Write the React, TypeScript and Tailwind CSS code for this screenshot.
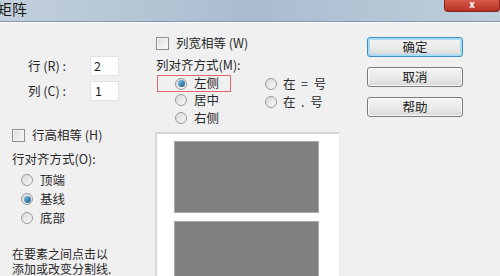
import React from 'react';

const font = { fontFamily: '"Noto Sans CJK SC", "Noto Sans", sans-serif' };

function Checkbox({ label }: { label: string }) {
  return (
    <div className="flex items-center gap-[7px]">
      <div className="w-[13px] h-[13px] border border-[#8e8f8f] bg-gradient-to-br from-[#dcdcdc] to-[#fbfbfb] shadow-[inset_0_0_0_1px_#f4f4f4]" />
      <span className="text-[12.5px] leading-none text-[#2a2a2a] whitespace-pre">{label}</span>
    </div>
  );
}

function Radio({ label, checked, gap = 'gap-[7px]' }: { label: string; checked?: boolean; gap?: string }) {
  return (
    <div className={`flex items-center ${gap}`}>
      <div className="w-[12px] h-[12px] rounded-full border border-[#9a9a9a] bg-gradient-to-br from-[#d8d8d8] to-[#fafafa] flex items-center justify-center">
        {checked && (
          <div className="w-[7px] h-[7px] rounded-full bg-gradient-to-br from-[#7ec3ea] to-[#0f5a8e]" />
        )}
      </div>
      <span className="text-[12.5px] leading-none text-[#2a2a2a] whitespace-pre">{label}</span>
    </div>
  );
}

function Btn({ label, primary }: { label: string; primary?: boolean }) {
  return (
    <div
      className={`w-[96px] h-[20px] rounded-[3px] flex items-center justify-center text-[12.5px] text-[#222] bg-gradient-to-b from-[#f3f3f3] via-[#ebebeb] to-[#d9d9d9] ${
        primary
          ? 'border border-[#3c8fc4] shadow-[inset_0_0_0_2px_#a9dcf4]'
          : 'border border-[#7b7b7b] shadow-[inset_0_0_0_1px_#fbfbfb]'
      }`}
    >
      {label}
    </div>
  );
}

export default function App() {
  return (
    <div className="w-[500px] h-[276px] overflow-hidden bg-[#f0f0f0] flex flex-col" style={font}>
      {/* Title bar */}
      <div className="h-[22px] shrink-0 flex items-start justify-between bg-gradient-to-r from-[#c3d0dc] via-[#a9bccf] to-[#bfcedc] border-b border-[#8596aa]">
        <span className="text-[15px] leading-[18px] text-[#1a1a1a] -ml-[3px]">矩阵</span>
        <div className="w-[56px] h-[12px] rounded-b-[4px] bg-gradient-to-b from-[#d7594a] to-[#b8301f] border border-[#7e2c23] border-t-0 flex items-start justify-center">
          <span className="text-[10px] leading-[8px] font-bold text-white">x</span>
        </div>
      </div>
      <div className="h-[1px] shrink-0 bg-[#fbfbfb]" />

      {/* Body */}
      <div className="flex flex-1">
        {/* Left column */}
        <div className="w-[155px] shrink-0 flex flex-col">
          <div className="mt-[33px] flex items-center">
            <span className="w-[90px] pl-[28px] text-[12.5px] text-[#2a2a2a] whitespace-pre">行 (R) :</span>
            <div className="w-[29px] h-[20px] bg-white border border-[#e2e2e2] text-[12.5px] leading-[18px] pl-[3px] text-[#222]">2</div>
          </div>
          <div className="mt-[5px] flex items-center">
            <span className="w-[90px] pl-[28px] text-[12.5px] text-[#2a2a2a] whitespace-pre">列 (C) :</span>
            <div className="w-[29px] h-[20px] bg-white border border-[#e2e2e2] text-[12.5px] leading-[18px] pl-[4px] text-[#222]">1</div>
          </div>
          <div className="mt-[28px] pl-[12px]">
            <Checkbox label="行高相等 (H)" />
          </div>
          <div className="mt-[9px] pl-[12px] text-[12.5px] leading-[16px] text-[#2a2a2a]">行对齐方式(O):</div>
          <div className="mt-[7px] pl-[21px] flex flex-col gap-[6.5px]">
            <Radio label="顶端" />
            <Radio label="基线" checked />
            <Radio label="底部" />
          </div>
          <div className="mt-[21px] pl-[12px] text-[12px] leading-[15px] text-[#2a2a2a]">
            在要素之间点击以
            <br />
            添加或改变分割线.
          </div>
        </div>

        {/* Middle column */}
        <div className="w-[190px] shrink-0 flex flex-col">
          <div className="mt-[14px] pl-[1px]">
            <Checkbox label="列宽相等 (W)" />
          </div>
          <div className="mt-[7px] pl-[1px] text-[12.5px] leading-[16px] text-[#2a2a2a]">列对齐方式(M):</div>
          <div className="mt-[2px] flex">
            <div className="flex flex-col">
              <div className="ml-[2px] w-[74px] h-[17px] border border-[#e0666a] flex items-center pl-[17px]">
                <Radio label="左侧" checked />
              </div>
              <div className="pl-[20px] mt-[2px] flex flex-col gap-[5px]">
                <Radio label="居中" />
                <Radio label="右侧" />
              </div>
            </div>
            <div className="ml-[34px] mt-[3px] flex flex-col gap-[5px]">
              <Radio label="在  =  号" gap="gap-[6px]" />
              <Radio label="在  .  号" gap="gap-[6px]" />
            </div>
          </div>
          {/* Preview */}
          <div className="mt-[8px] w-[184px] flex-1 bg-white border-t-2 border-l-2 border-[#d6d6d6] pt-[7px] pl-[17px] flex flex-col gap-[8px]">
            <div className="w-[145px] h-[72px] shrink-0 bg-[#808080] border border-[#a8a8a8]" />
            <div className="w-[145px] h-[72px] shrink-0 bg-[#808080] border border-[#a8a8a8]" />
          </div>
        </div>

        {/* Right column */}
        <div className="flex-1 flex flex-col pl-[22px] pt-[14px] gap-[10px]">
          <Btn label="确定" primary />
          <Btn label="取消" />
          <Btn label="帮助" />
        </div>
      </div>
    </div>
  );
}
